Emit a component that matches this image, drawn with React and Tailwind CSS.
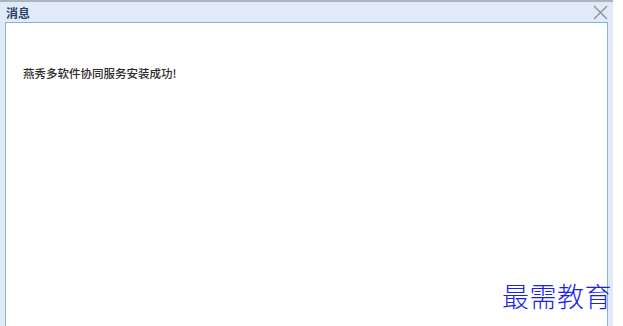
export default function App() {
  return (
    <div className="relative w-[623px] h-[326px] bg-white overflow-hidden" style={{ fontFamily: '"Noto Sans CJK SC", "Noto Sans", sans-serif' }}>
      <div className="w-[613px] h-[326px] bg-[#e1ebf8] border-t-2 border-[#a9b4c0] flex flex-col">
        <div className="h-[20px] flex items-center justify-between pl-[6px] pr-[5px] shrink-0">
          <span className="text-[12px] font-bold text-[#2a3f6e] leading-none mt-[2px]">消息</span>
          <svg width="15" height="15" viewBox="0 0 15 15" className="mt-[1px]">
            <path d="M1 1 L14 14 M14 1 L1 14" stroke="#8a8f96" strokeWidth="1.3" fill="none" />
          </svg>
        </div>
        <div className="ml-[5px] w-[603px] flex-1 bg-white border border-b-0 border-[#86b2da]">
          <div className="pt-[45px] pl-[17px] text-[11.5px] font-medium text-[#2b2b2b] leading-none">燕秀多软件协同服务安装成功!</div>
        </div>
      </div>
      <div className="absolute left-[502px] top-[282px] text-[27px] font-light leading-none tracking-[0.5px] text-[#1a1ef0]" style={{ fontFamily: '"Noto Sans CJK SC", serif' }}>最需教育</div>
    </div>
  );
}
